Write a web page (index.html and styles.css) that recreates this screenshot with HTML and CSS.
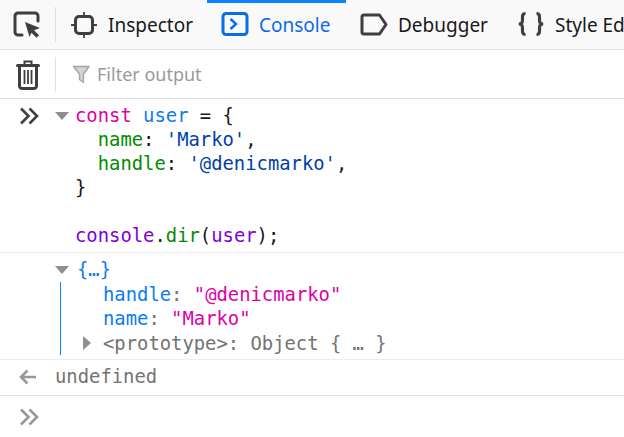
FILE: index.html
```html
<!DOCTYPE html>
<html lang="en">
<head>
<meta charset="utf-8">
<title>Console</title>
<link rel="stylesheet" href="styles.css">
</head>
<body>
<div class="app">
  <nav class="tabs">
    <div class="pick">
      <svg class="icon" width="28" height="28" viewBox="0 0 28 28"><path d="M9 24H5a3 3 0 0 1-3-3V5a3 3 0 0 1 3-3h17a3 3 0 0 1 3 3v5" fill="none" stroke="#3f3f42" stroke-width="3" stroke-linecap="round"/><path d="M12 11l15 6-6 2.200 5 5-2.500 2.500-5-5L16.500 26z" fill="#3f3f42"/></svg>
    </div>
    <div class="tab tab-inspector">
      <svg class="icon" width="28" height="28" viewBox="0 0 28 28"><rect x="5.500" y="5.500" width="17" height="17" rx="3.500" fill="none" stroke="#3f3f42" stroke-width="3"/><path d="M14 1v4M14 23v4M1 14h4M23 14h4" stroke="#3f3f42" stroke-width="1.800" fill="none"/></svg>
      <span>Inspector</span>
    </div>
    <div class="tab tab-console active">
      <svg class="icon" width="28" height="28" viewBox="0 0 28 28"><rect x="2" y="2.500" width="24" height="21" rx="3" fill="none" stroke="#0a6ce8" stroke-width="3"/><path d="M9.500 8l5.500 5-5.500 5" fill="none" stroke="#0a6ce8" stroke-width="2.400"/></svg>
      <span>Console</span>
    </div>
    <div class="tab tab-debugger">
      <svg class="icon" width="28" height="28" viewBox="0 0 28 28"><path d="M4 4h15.500l6.500 9.500-6.500 9.500H4a2 2 0 0 1-2-2V6a2 2 0 0 1 2-2z" fill="none" stroke="#3f3f42" stroke-width="3" stroke-linejoin="round"/></svg>
      <span>Debugger</span>
    </div>
    <div class="tab">
      <svg class="icon" width="28" height="28" viewBox="0 0 28 28"><path d="M8.500 2.500C5 2.500 5.500 5.500 5.500 8c0 3 0 4.500-3.500 5 3.500.5 3.500 2 3.500 5 0 2.500-.5 5.500 3 5.500M19.500 2.500c3.500 0 3 3 3 5.500 0 3 0 4.500 3.500 5-3.500.5-3.500 2-3.500 5 0 2.500.5 5.500-3 5.500" fill="none" stroke="#3f3f42" stroke-width="3.200"/></svg>
      <span>Style Editor</span>
    </div>
  </nav>
  <div class="filter-bar">
    <div class="trash">
      <svg width="24" height="30" viewBox="0 0 24 30"><path d="M8.500 4V1.500h7V4" fill="none" stroke="#3f3f42" stroke-width="2"/><path d="M1.500 5.500h21" stroke="#3f3f42" stroke-width="3" stroke-linecap="round"/><path d="M3.500 6v20a2.500 2.500 0 0 0 2.500 2.500h12a2.500 2.500 0 0 0 2.500-2.500V6" fill="none" stroke="#3f3f42" stroke-width="3"/><path d="M8.500 10v14M12 10v14M15.500 10v14" stroke="#3f3f42" stroke-width="1.800"/></svg>
    </div>
    <div class="filter">
      <svg width="20" height="20" viewBox="0 0 20 20"><path d="M1.500 2.500h15.500l-5.500 7.500v8.500l-4-3V10z" fill="#d4d4d6" stroke="#a5a5a7" stroke-width="1.400" stroke-linejoin="round"/></svg>
      <span>Filter output</span>
    </div>
  </div>
  <section class="row row-input">
    <div class="gutter">
      <svg width="20" height="18" viewBox="0 0 20 18"><path d="M1 1.500l7.500 7.500L1 16.500M9.500 1.500L17 9l-7.500 7.500" fill="none" stroke="#3f3f42" stroke-width="2.600"/></svg>
    </div>
    <div class="twisty"><i class="tri-down"></i></div>
    <pre class="code"><b class="pk">const</b> <b class="bl">user</b> = {
  <b class="gr">name</b>: <b class="nv">'Marko'</b>,
  <b class="gr">handle</b>: <b class="nv">'@denicmarko'</b>,
}

<b class="pu">console</b>.<b class="gr">dir</b>(<b class="pu">user</b>);</pre>
  </section>
  <section class="row row-output">
    <div class="gutter"></div>
    <div class="twisty"><i class="tri-down"></i></div>
    <div class="tree">
      <div class="summary">{…}</div>
      <pre class="props"><b class="bl">handle</b><b class="gy">:</b> <b class="pk">"@denicmarko"</b>
<b class="bl">name</b><b class="gy">:</b> <b class="pk">"Marko"</b>
<b class="gy proto"><i class="tri-right"></i>&lt;prototype&gt;: Object { … }</b></pre>
    </div>
  </section>
  <section class="row row-result">
    <div class="gutter">
      <svg width="20" height="18" viewBox="0 0 20 18"><path d="M18 9H3M9.500 2.500L3 9l6.500 6.500" fill="none" stroke="#98989b" stroke-width="2.600"/></svg>
    </div>
    <pre class="result">undefined</pre>
  </section>
  <section class="row row-prompt">
    <div class="gutter">
      <svg width="20" height="18" viewBox="0 0 20 18"><path d="M1 1.500l7.500 7.500L1 16.500M9.500 1.500L17 9l-7.500 7.500" fill="none" stroke="#98989b" stroke-width="2.600"/></svg>
    </div>
  </section>
</div>
</body>
</html>
```
FILE: styles.css
```css
html, body {
  margin: 0;
  padding: 0;
  background: #fff;
}
.app {
  width: 624px;
  height: 437px;
  overflow: hidden;
  font-family: "Noto Sans", sans-serif;
}
.tabs {
  display: flex;
  height: 49px;
  background: #f9f9fa;
  border-bottom: 1px solid #e0e0e1;
  white-space: nowrap;
  overflow: hidden;
}
.pick {
  flex: none;
  width: 56px;
  height: 35px;
  box-sizing: border-box;
  margin: 7px 0;
  padding: 4px 0 0 13px;
  border-right: 1px solid #e0e0e1;
}
.tab {
  display: flex;
  align-items: center;
  gap: 10px;
  padding: 0 14px;
  height: 49px;
  box-sizing: border-box;
  border-top: 3px solid transparent;
  padding-bottom: 3px;
  font-size: 19px;
  color: #18181a;
  flex: none;
}
.tab-inspector { width: 151px; }
.tab-console { width: 139px; }
.tab-debugger { width: 157px; }
.tab.active {
  border-top-color: #0a84ff;
  color: #0a6ce8;
}
.icon { flex: none; }
.filter-bar {
  display: flex;
  height: 48px;
  border-bottom: 1px solid #e0e0e1;
  background: #fff;
}
.trash {
  flex: none;
  width: 56px;
  height: 35px;
  margin-top: 7px;
  box-sizing: border-box;
  padding: 3px 0 0 16px;
  border-right: 1px solid #e0e0e1;
}
.filter {
  display: flex;
  align-items: center;
  gap: 5px;
  padding-left: 16px;
  font-size: 18px;
  color: #99999b;
}
.row {
  display: flex;
  border-bottom: 1px solid #ededf0;
  box-sizing: border-box;
}
.gutter {
  width: 55px;
  flex: none;
  box-sizing: border-box;
  padding: 8px 0 0 20px;
}
.twisty {
  width: 21px;
  flex: none;
  padding: 13px 0 0 0;
  box-sizing: border-box;
}
.tri-down {
  display: block;
  width: 0;
  height: 0;
  border-left: 7px solid transparent;
  border-right: 7px solid transparent;
  border-top: 8px solid #8f8f92;
}
.tri-right {
  position: absolute;
  left: -20px;
  top: 4px;
  width: 0;
  height: 0;
  border-top: 7px solid transparent;
  border-bottom: 7px solid transparent;
  border-left: 8px solid #8f8f92;
}
pre, .summary {
  margin: 0;
  font-family: "DejaVu Sans Mono", monospace;
  font-size: 18.850px;
  line-height: 24px;
}
b { font-weight: normal; }
.code {
  color: #18181a;
  padding-top: 5px;
  margin-left: -1px;
}
.pk { color: #dd00a9; }
.bl { color: #0a7cf0; }
.gr { color: #058b00; }
.nv { color: #003eaa; }
.pu { color: #8000d7; }
.gy { color: #737373; }
.row-input { height: 154px; }
.row-output { height: 107px; }
.row-output .gutter { padding: 0; }
.tree { position: relative; }
.summary {
  color: #0a7cf0;
  padding: 5px 0 0 1px;
}
.props {
  margin-left: -16px;
  padding: 0.600px 0 0 42px;
  border-left: 1px solid #0a84ff;
  height: 72px;
  line-height: 24.500px;
}
.proto {
  position: relative;
  display: inline-block;
}
.row-result { height: 36px; border-bottom-color: #e0e0e1; }
.row-result .gutter { padding: 8px 0 0 18px; }
.result {
  color: #737373;
  padding-top: 5px;
}
.row-prompt { border-bottom: 0; }
.row-prompt .gutter { padding-top: 12px; }
```
